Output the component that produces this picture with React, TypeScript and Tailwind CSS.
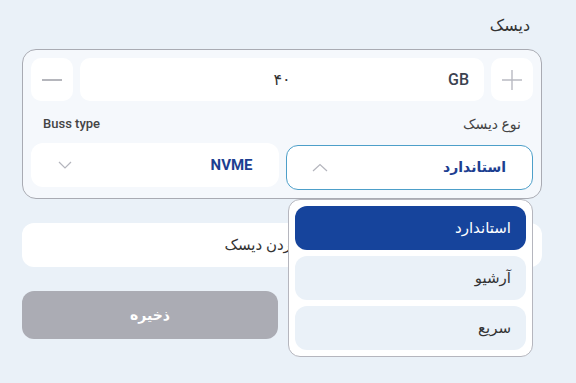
import React from "react"

const font = { fontFamily: 'Roboto, "DejaVu Sans", sans-serif' }

function ChevronUp() {
  return (
    <svg width="16" height="9" viewBox="0 0 16 9" fill="none">
      <polyline points="1,8 8,1.5 15,8" stroke="#b4b5bd" strokeWidth="1.2" />
    </svg>
  )
}

function ChevronDown() {
  return (
    <svg width="14" height="8" viewBox="0 0 14 8" fill="none">
      <polyline points="1,1 7,7 13,1" stroke="#b4b5bd" strokeWidth="1.2" />
    </svg>
  )
}

const options = ["استاندارد", "آرشیو", "سریع"]

export default function App() {
  return (
    <div dir="rtl" className="min-h-screen bg-[#eaf1f8] pl-[22px] pr-[34px] pt-[16px]" style={font}>
      <div className="pr-[12px] text-[16px] leading-[20px] text-[#333]">دیسک</div>

      <div className="mt-[13px] rounded-[14px] border border-[#a9abb3] bg-[#f5f8fc] p-2">
        {/* size stepper */}
        <div className="flex h-[43px] gap-[7px]">
          <button className="flex w-[42px] items-center justify-center rounded-[10px] bg-white">
            <svg width="20" height="20" viewBox="0 0 20 20" fill="none">
              <path d="M0 10H20M10 0V20" stroke="#b9bac2" strokeWidth="1.4" />
            </svg>
          </button>
          <div className="grid flex-1 grid-cols-[1fr_auto_1fr] items-center rounded-[10px] bg-white">
            <span className="pr-[15px] text-[16px] font-medium text-[#3b4250]">GB</span>
            <span className="text-[16px] text-[#333]">۴۰</span>
            <span />
          </div>
          <button className="flex w-[42px] items-center justify-center rounded-[10px] bg-white">
            <svg width="20" height="4" viewBox="0 0 20 4" fill="none">
              <path d="M0 2H20" stroke="#a3a4ac" strokeWidth="1.6" />
            </svg>
          </button>
        </div>

        {/* type + bus */}
        <div className="mt-[13px] grid grid-cols-2 gap-[7px]">
          <div className="relative">
            <div className="h-[20px] pr-[12px] text-[14px] leading-[20px] text-[#444]">نوع دیسک</div>
            <div className="mt-[11px] flex h-[45px] items-center justify-between rounded-[12px] border border-[#4d9fc9] bg-white pl-[25px] pr-[26px]">
              <span className="text-[14px] font-bold text-[#1d3f91]">استاندارد</span>
              <ChevronUp />
            </div>

            {/* open dropdown */}
            <div className="absolute left-[2px] right-0 top-full z-10 mt-[9px] flex flex-col gap-[6px] rounded-[12px] border border-[#b5b6be] bg-white p-[6px]">
              {options.map((o, i) => (
                <div
                  key={o}
                  className={
                    i === 0
                      ? "flex h-[44px] items-center rounded-[12px] bg-[#16449c] pr-[15px] text-[15px] text-white"
                      : "flex h-[44px] items-center rounded-[12px] bg-[#eaf1f8] pr-[15px] text-[15px] text-[#333]"
                  }
                >
                  {o}
                </div>
              ))}
            </div>
          </div>

          <div>
            <div dir="ltr" className="h-[20px] pl-[12px] text-[13px] font-medium leading-[20px] text-[#444]">
              Buss type
            </div>
            <div className="mt-[9px] flex h-[44px] items-center justify-between rounded-[12px] bg-white pl-[27px] pr-[26px]">
              <span className="text-[15px] font-bold text-[#1d3f91]">NVME</span>
              <ChevronDown />
            </div>
          </div>
        </div>
      </div>

      <button className="mt-[24px] flex h-[44px] w-full items-center justify-center rounded-[12px] bg-white text-[15px] text-[#333]">
        اضافه کردن دیسک
      </button>

      <div className="mt-[24px] grid grid-cols-2 gap-2">
        <div />
        <button className="h-[48px] rounded-[12px] bg-[#abacb4] text-[14px] font-bold text-white">ذخیره</button>
      </div>
    </div>
  )
}
